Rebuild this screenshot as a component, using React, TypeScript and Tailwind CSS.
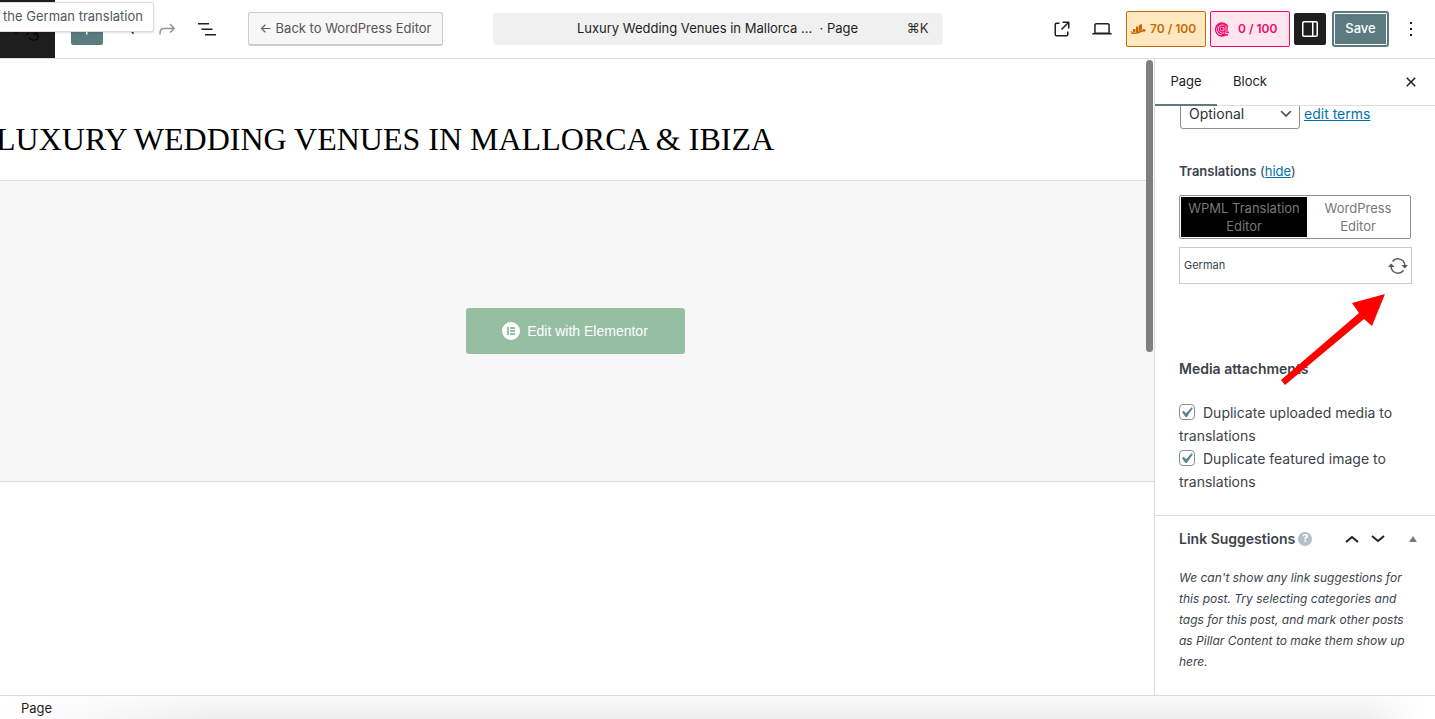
import type { ReactNode } from "react";

function Icon({ d, className = "size-6" }: { d: string; className?: string }) {
  return (
    <svg viewBox="0 0 24 24" fill="currentColor" aria-hidden="true" className={`${className} shrink-0`}>
      <path d={d} />
    </svg>
  );
}

const icons = {
  redo: "M15.6 6.5l-1.1 1 2.9 3.3H8c-.9 0-1.7.3-2.3.9-1.4 1.5-1.4 4.2-1.4 5.6v.2h1.5v-.3c0-1.1 0-3.5 1-4.5.3-.3.7-.5 1.3-.5h9.2L14.5 15l1.1 1.1 4.6-4.6-4.6-5z",
  undo: "M18.3 10.700c-.6-.6-1.4-.9-2.3-.9H7.700l2.9-3.3-1.1-1-4.5 5L10 17.200l1-1-3-4.900H16c.5 0 .9.2 1.3.5.6.6.8 1.500 1 2.500h1.500c-.2-1.500-.5-2.800-1.500-3.600z",
  listView: "M3 6h11v1.5H3V6Zm3.5 5.5h11V13h-11v-1.5ZM21 17H10v1.5h11V17Z",
  plus: "M11 12.5V17.5H12.5V12.5H17.5V11H12.5V6H11V11H6V12.5H11Z",
  external:
    "M19.5 4.5h-7V6h4.44l-5.97 5.97 1.06 1.06L18 7.06v4.44h1.5v-7Zm-13 1a2 2 0 0 0-2 2v10a2 2 0 0 0 2 2h10a2 2 0 0 0 2-2v-3H17v3a.5.5 0 0 1-.5.5h-10a.5.5 0 0 1-.5-.5v-10a.5.5 0 0 1 .5-.5h3V5.5h-3Z",
  desktop:
    "M20.5 16h-.7V8c0-1.1-.9-2-2-2H6.2c-1.1 0-2 .9-2 2v8h-.7c-.8 0-1.5.7-1.5 1.5h20c0-.8-.7-1.5-1.5-1.5zM5.7 8c0-.3.2-.5.5-.5h11.6c.3 0 .5.2.5.5v7.6H5.7V8z",
  drawer:
    "M18 4H6c-1.1 0-2 .9-2 2v12c0 1.1.9 2 2 2h12c1.1 0 2-.9 2-2V6c0-1.1-.9-2-2-2zm-4 14.5H6c-.3 0-.5-.2-.5-.5V6c0-.3.2-.5.5-.5h8v13zm4.5-.5c0 .3-.2.5-.5.5h-2.5v-13H18c.3 0 .5.2.5.5v12z",
  more: "M13 19h-2v-2h2v2zm0-6h-2v-2h2v2zm0-6h-2V5h2v2z",
  close:
    "M12 13.06l3.712 3.713 1.061-1.06L13.061 12l3.712-3.712-1.06-1.06L12 10.938 8.288 7.227l-1.061 1.06L10.939 12l-3.712 3.712 1.06 1.061L12 13.061z",
};

function IconButton({ label, d, className = "" }: { label: string; d: string; className?: string }) {
  return (
    <button type="button" aria-label={label} className={`flex h-8 w-8 shrink-0 items-center justify-center ${className}`}>
      <Icon d={d} />
    </button>
  );
}

function EditorHeader() {
  return (
    <header className="relative flex h-[59px] shrink-0 items-center border-b border-[#dddddd] bg-white text-[13px]">
      <div className="flex h-full flex-1 items-center">
        <a href="#" aria-label="View pages" className="flex h-full w-[55px] items-end justify-center bg-[#1e1e1e] pb-4">
          <svg viewBox="0 0 28 12" className="h-3 w-7 text-[#0a0a0a]" fill="none" stroke="currentColor" aria-hidden="true">
            <path d="M1 3h2M12 5l3-2M18 1c3-1 6 1 4 4M15 8c2 3 9 3 9-1s-4-4-5-2" strokeWidth="1.5" />
          </svg>
        </a>
        <IconButton label="Toggle block inserter" d={icons.plus} className="ml-4 rounded-[2px] bg-[#5b7b80] text-white" />
        <IconButton label="Undo" d={icons.undo} className="ml-4" />
        <IconButton label="Redo" d={icons.redo} className="text-[#949494]" />
        <IconButton label="Document overview" d={icons.listView} className="ml-2" />
        <button
          type="button"
          className="ml-[25px] h-[34px] w-[195px] rounded-[3px] border border-b-2 border-[#cccccc] bg-[#f7f7f7] whitespace-nowrap text-[#555555]"
        >
          ← Back to WordPress Editor
        </button>
      </div>

      <button type="button" className="flex h-8 w-[450px] items-center rounded bg-[#f0f0f0] px-[14px]">
        <span className="flex-1" />
        <span className="whitespace-pre">Luxury Wedding Venues in Mallorca ...  · Page</span>
        <span className="flex-1 text-right text-[#2f2f2f]">⌘K</span>
      </button>

      <div className="flex flex-1 items-center justify-end">
        <IconButton label="View page" d={icons.external} className="mr-2" />
        <IconButton label="Preview" d={icons.desktop} className="mr-2" />
        <button
          type="button"
          className="mr-1 flex h-9 w-20 items-center gap-1 rounded-[2px] border border-[#bf6c06] bg-[#ffe8bf] pl-[3px] text-xs font-semibold whitespace-nowrap text-[#bf6c06]"
        >
          <svg viewBox="0 0 16 12" fill="currentColor" className="h-3 w-4 shrink-0" aria-hidden="true">
            <path d="M3 6h2.500v3H3zM6 3.500h2.500V9L6 9.500zM9 2l3-1v6L9 8.500z" />
            <path d="M0 8.500h2l1 1c4 .5 6-1.500 10-2.500l-.5-1.500L16 7l-2 2.500-.5-1C10 9.500 8 11 4 11H1l1-1z" />
          </svg>
          70 / 100
        </button>
        <button
          type="button"
          className="mr-1 flex h-9 w-20 items-center gap-2 rounded-[2px] border border-[#f30b6b] bg-[#ffe5ee] pl-[3px] text-xs font-semibold whitespace-nowrap text-[#f30b6b]"
        >
          <svg viewBox="0 0 16 16" fill="none" stroke="currentColor" strokeWidth="1.3" className="size-4 shrink-0" aria-hidden="true">
            <path d="M12.500 13.200A6.500 6.500 0 1 1 14 6M12 4.500A5 5 0 1 0 11 12.200M11 4.500v7.500M10.500 6A3 3 0 1 0 10.500 10M13 4v7.500h2M14 14H8" />
            <circle cx="8" cy="8" r="1" fill="currentColor" />
          </svg>
          0 / 100
        </button>
        <IconButton label="Settings" d={icons.drawer} className="mr-[6px] rounded-[2px] bg-[#1e1e1e] text-white" />
        <button
          type="button"
          className="mr-[6px] h-9 w-[57px] rounded-[3px] border-2 border-[#5b7b80] bg-[#5b7b80] font-medium text-white ring-1 ring-white ring-inset"
        >
          Save
        </button>
        <IconButton label="Options" d={icons.more} className="mr-2" />
      </div>

      <div
        role="tooltip"
        className="absolute top-[2px] left-0 flex h-[30px] w-[154px] items-center justify-end overflow-hidden rounded-r-[3px] border border-l-0 border-[#dcdcdc] bg-white pr-[10px] whitespace-nowrap text-[#50575e] shadow-sm"
      >
        Edit the German translation
      </div>
    </header>
  );
}

function Canvas() {
  return (
    <main className="relative min-w-0 flex-1 overflow-hidden bg-white">
      <h1 className="-ml-1 pt-[60px] pb-5 font-['Liberation_Serif',serif] text-[32px] leading-[41px] whitespace-nowrap text-black">
        LUXURY WEDDING VENUES IN MALLORCA &amp; IBIZA
      </h1>
      <div className="flex h-[302px] items-center justify-center border-y border-[#dddddd] bg-[#f7f7f7] pr-1">
        <button
          type="button"
          className="flex h-[46px] w-[219px] items-center justify-center gap-[7px] rounded-[3px] bg-[#96bea1] font-['Liberation_Sans',sans-serif] text-sm font-medium text-white"
        >
          <svg viewBox="0 0 18 18" className="size-[18px]" aria-hidden="true">
            <circle cx="9" cy="9" r="9" fill="white" />
            <path d="M5 5h2v8H5zM8 5h5v2H8zM8 8h5v2H8zM8 11h5v2H8z" fill="#96bea1" />
          </svg>
          Edit with Elementor
        </button>
      </div>
      <div className="absolute top-px right-px h-[292px] w-[7px] rounded-full bg-[#7f7f7f]" />
    </main>
  );
}

function Check({ id, children }: { id: string; children: ReactNode }) {
  return (
    <div>
      <span className="relative -mt-1 mr-2 inline-block size-4 align-middle">
        <input
          id={id}
          type="checkbox"
          defaultChecked
          className="block size-4 appearance-none rounded border border-[#8c8f94] bg-white"
        />
        <svg viewBox="0 0 20 20" className="pointer-events-none absolute -top-[2px] -left-[3px] size-[21px]" fill="#5b8790" aria-hidden="true">
          <path d="M14.83 4.89l1.34.94-5.81 8.38H9.02L5.78 9.67l1.34-1.25 2.57 2.4z" />
        </svg>
      </span>
      <label htmlFor={id}>{children}</label>
    </div>
  );
}

function RefreshIcon() {
  return (
    <svg viewBox="0 0 20 16" className="h-4 w-5" fill="none" stroke="#555555" strokeWidth="1.4" aria-hidden="true">
      <path d="M4.500 3.500A7 7 0 0 1 16.900 7M15.500 12.500A7 7 0 0 1 3.100 9" />
      <path d="M0 9L3.200 5.500L6.500 9zM13.500 7H20L16.800 10.500z" fill="#555555" stroke="none" />
    </svg>
  );
}

function Sidebar() {
  return (
    <aside className="flex w-[281px] shrink-0 flex-col border-l border-[#dddddd] bg-white text-[#3c434a]">
      <div className="flex h-[47px] shrink-0 items-stretch border-b border-[#dddddd] text-[13px] text-[#1e1e1e]">
        <button type="button" className="-mb-px w-[62px] border-b-2 border-[#5b7b80]">
          Page
        </button>
        <button type="button" className="w-[66px]">
          Block
        </button>
        <button type="button" aria-label="Close settings" className="mr-3 ml-auto">
          <Icon d={icons.close} />
        </button>
      </div>

      <div className="min-h-0 flex-1 overflow-hidden">
        <div className="relative flow-root h-[409px] px-6">
          <div className="-mt-2 ml-px flex items-center">
            <div className="relative">
              <select
                aria-label="Terms"
                defaultValue="Optional"
                className="h-[31px] w-[120px] appearance-none rounded-[3px] border border-[#8c8f94] bg-white pl-2 text-sm text-[#2c3338]"
              >
                <option>Optional</option>
              </select>
              <svg viewBox="0 0 20 20" className="pointer-events-none absolute top-2 right-[6px] size-4" fill="#555555" aria-hidden="true">
                <path d="M5 6l5 5 5-5 2 1-7 7-7-7 2-1z" />
              </svg>
            </div>
            <a href="#" className="ml-1 text-sm text-[#0073aa] underline">
              edit terms
            </a>
          </div>

          <p className="mt-8 text-[13px] leading-5">
            <strong className="font-semibold">Translations</strong> (
            <a href="#" className="text-[#0073aa] underline">
              hide
            </a>
            )
          </p>

          <div className="mt-[14px] flex h-11 rounded-[2px] border border-[#8c8f94] p-px text-[13px] leading-[18px] text-[#777777]">
            <button type="button" className="w-[126px] shrink-0 bg-black">
              WPML Translation Editor
            </button>
            <button type="button" className="flex-1 px-3">
              WordPress Editor
            </button>
          </div>

          <div className="mt-2 -mr-px flex h-[37px] items-center justify-between border border-[#cccccc] pr-[3px] pl-1 text-[11px]">
            German
            <button type="button" aria-label="Update the German translation">
              <RefreshIcon />
            </button>
          </div>

          <h2 className="mt-[75px] text-sm leading-5 font-semibold">Media attachments</h2>
          <div className="mt-[22px] text-sm leading-[23px]">
            <Check id="dup-media">Duplicate uploaded media to translations</Check>
            <Check id="dup-image">Duplicate featured image to translations</Check>
          </div>

          <svg viewBox="0 0 104 92" className="pointer-events-none absolute top-[188px] right-[50px] h-[92px] w-[104px]" aria-hidden="true">
            <path d="M104 0L91 32 83 25 4 91 0 86 78 19 71 9z" fill="#ff0000" />
          </svg>
        </div>

        <section className="border-t border-[#dddddd] px-6">
          <div className="flex h-[45px] items-center">
            <h2 className="text-sm font-semibold whitespace-nowrap">Link Suggestions</h2>
            <span className="ml-[3px] flex size-[14px] items-center justify-center rounded-full bg-[#b5bfc9] text-[11px] font-bold text-white">
              ?
            </span>
            <div className="-mr-[6px] ml-auto flex items-center text-[#1d2327]">
              <button type="button" aria-label="Move up">
                <svg viewBox="0 0 14 8" className="mr-3 h-2 w-[14px]" fill="none" stroke="currentColor" strokeWidth="2" aria-hidden="true">
                  <path d="M1 7l6-5 6 5" />
                </svg>
              </button>
              <button type="button" aria-label="Move down">
                <svg viewBox="0 0 14 8" className="mr-6 h-2 w-[14px]" fill="none" stroke="currentColor" strokeWidth="2" aria-hidden="true">
                  <path d="M1 1l6 5 6-5" />
                </svg>
              </button>
              <button type="button" aria-label="Toggle panel">
                <svg viewBox="0 0 8 6" className="h-[6px] w-2" fill="#787c82" aria-hidden="true">
                  <path d="M4 0l4 6H0z" />
                </svg>
              </button>
            </div>
          </div>
          <p className="mt-[6px] -mr-2 text-xs leading-[21px] italic">
            We can't show any link suggestions for this post. Try selecting categories and tags for this post, and mark other posts as
            Pillar Content to make them show up here.
          </p>
        </section>
      </div>
    </aside>
  );
}

export default function App() {
  return (
    <div className="flex h-screen flex-col overflow-hidden bg-white font-[Inter,sans-serif] text-[#1e1e1e]">
      <EditorHeader />
      <div className="flex min-h-0 flex-1">
        <Canvas />
        <Sidebar />
      </div>
      <footer className="flex h-6 shrink-0 items-center border-t border-[#dddddd] bg-[linear-gradient(to_right,#fff,#fff0_15%,#fff0_95%,#fff_99%),linear-gradient(to_bottom,#fafafa,#eeeeee)] pt-[2px] pl-[21px] text-[13px]">
        Page
      </footer>
    </div>
  );
}
